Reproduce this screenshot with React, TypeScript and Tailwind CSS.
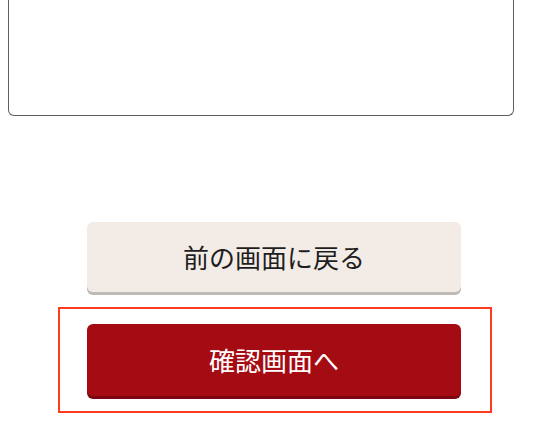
export default function App() {
  const font = { fontFamily: '"Noto Sans CJK JP", "Noto Sans", sans-serif' };
  return (
    <div className="w-[550px] h-[426px] bg-white overflow-hidden" style={font}>
      <div className="ml-[8px] w-[506px] h-[116px] border-x-[1.5px] border-b-[1.5px] border-[#5e5e5e] rounded-b-[6px] bg-white" />
      <div className="mt-[106px] ml-[87px] w-[374px] h-[70px] rounded-[6px] bg-[#f3ece6] shadow-[0_3px_0_#bdbbb4] flex items-center justify-center text-[26px] text-[#1e1e1e] leading-none">
        前の画面に戻る
      </div>
      <div className="mt-[15px] ml-[58px] w-[434px] h-[106px] border-2 border-[#ff3b1f] pt-[15px] pl-[27px]">
        <div className="w-[374px] h-[72px] rounded-[6px] bg-[#a50b13] shadow-[0_3px_0_#7b0710] flex items-center justify-center text-[26px] text-white leading-none">
          確認画面へ
        </div>
      </div>
    </div>
  );
}
